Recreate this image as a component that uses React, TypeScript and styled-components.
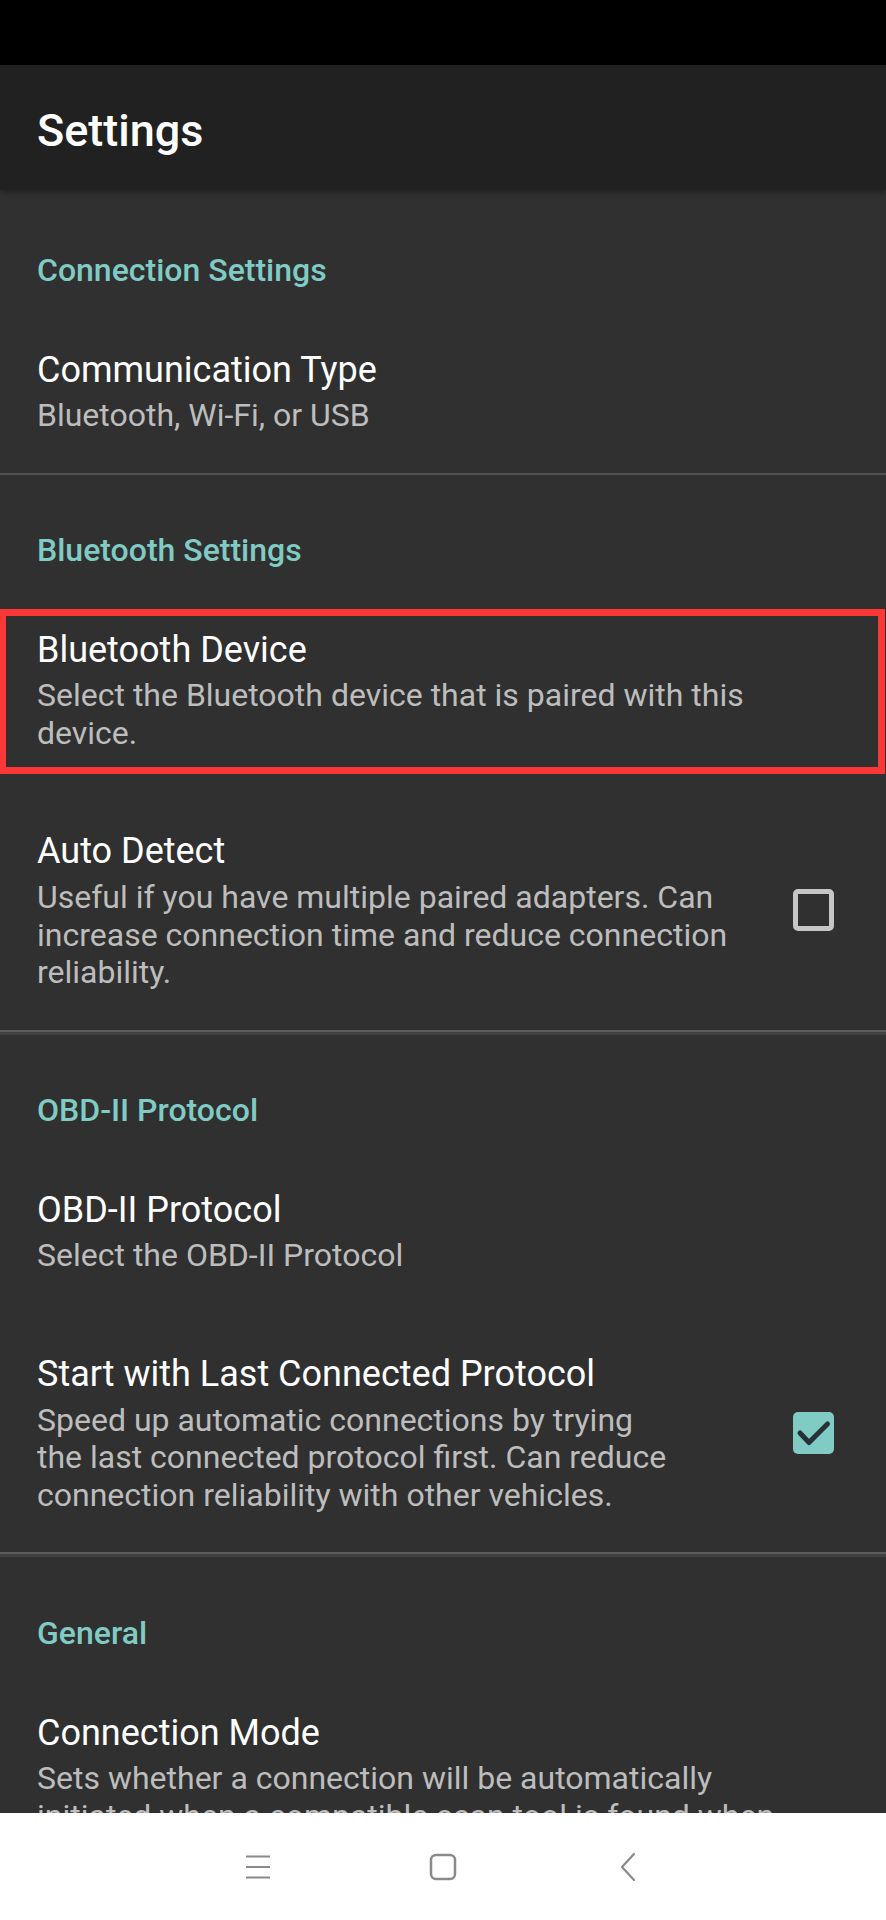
import React from "react";
import styled, {createGlobalStyle} from "styled-components";

const GlobalStyle = createGlobalStyle`
  html, body {
    margin: 0;
    padding: 0;
    background: #303030;
  }
  body {
    font-family: Roboto, "Noto Sans", "Liberation Sans", sans-serif;
    -webkit-font-smoothing: antialiased;
  }
  * {
    box-sizing: border-box;
  }
`;

const Screen = styled.div`
  width: 886px;
  height: 1920px;
  display: flex;
  flex-direction: column;
  overflow: hidden;
  background: #303030;
`;

const StatusBar = styled.div`
  height: 65px;
  flex-shrink: 0;
  background: #000;
`;

const AppBar = styled.header`
  position: relative;
  z-index: 1;
  height: 125px;
  flex-shrink: 0;
  padding: 40px 37px 0;
  background: #212121;
  box-shadow: 0 2px 6px rgba(0, 0, 0, 0.35);
`;

const AppTitle = styled.h1`
  margin: 0;
  font-size: 45px;
  line-height: 52px;
  font-weight: 500;
  color: #fff;
`;

const List = styled.main`
  flex: 1;
  min-height: 0;
  overflow: hidden;
`;

const Category = styled.div<{ $first?: boolean }>`
  padding: ${(p) => (p.$first ? "59.5px" : "55.2px")} 37px 19px;
  font-size: 32px;
  line-height: 40px;
  font-weight: 500;
  color: #80cbc4;
`;

const Item = styled.div`
  position: relative;
  display: flex;
  align-items: center;
  padding: 38px 52px 38px 37px;
`;

const ItemText = styled.div`
  flex: 1;
  min-width: 0;
`;

const ItemTitle = styled.div`
  font-size: 36px;
  line-height: 46px;
  color: #fff;
  white-space: nowrap;
`;

const ItemSummary = styled.div`
  margin-top: 4.5px;
  font-size: 32px;
  line-height: 37.6px;
  color: #bdbdbd;
  white-space: nowrap;
`;

const Highlight = styled.div`
  position: absolute;
  top: 20px;
  bottom: 16px;
  left: 0;
  right: 1px;
  border: 7px solid #fc3737;
  border-left-width: 6px;
  pointer-events: none;
`;

const Box = styled.div<{ $checked?: boolean }>`
  width: 41px;
  height: 42px;
  flex-shrink: 0;
  border-radius: 5px;
  border: ${(p) => (p.$checked ? "none" : "5px solid #c6c6c6")};
  background: ${(p) => (p.$checked ? "#80cbc4" : "transparent")};
  display: flex;
  align-items: center;
  justify-content: center;
`;

const Divider = styled.div<{ $heavy?: boolean }>`
  height: ${(p) => (p.$heavy ? "5px" : "2px")};
  background: ${(p) =>
    p.$heavy ? "linear-gradient(#5c5c5c 0 45%, #414141 45% 100%)" : "#505050"};
`;

const NavBar = styled.nav`
  height: 107px;
  flex-shrink: 0;
  background: #fff;
  display: flex;
  align-items: center;
  justify-content: center;
  gap: 145px;
`;

const NavButton = styled.div`
  width: 40px;
  height: 40px;
  display: flex;
  align-items: center;
  justify-content: center;
  color: #8a8a8a;
`;

type Pref = {
  title: string;
  lines?: string[];
  checkbox?: "on" | "off";
  highlight?: boolean;
};

function Checkbox({checked}: { checked: boolean }) {
  return (
    <Box $checked={checked}>
      {checked && (
        <svg width="41" height="42" viewBox="0 0 41 42">
          <path d="M7 21 L16 30.5 L34.5 12" fill="none" stroke="#263238" strokeWidth="5" strokeLinecap="round" strokeLinejoin="round" />
        </svg>
      )}
    </Box>
  );
}

function Preference({title, lines, checkbox, highlight}: Pref) {
  return (
    <Item>
      <ItemText>
        <ItemTitle>{title}</ItemTitle>
        {lines && (
          <ItemSummary>
            {lines.map((l, i) => (
              <React.Fragment key={i}>
                {i > 0 && <br />}
                {l}
              </React.Fragment>
            ))}
          </ItemSummary>
        )}
      </ItemText>
      {checkbox && <Checkbox checked={checkbox === "on"} />}
      {highlight && <Highlight />}
    </Item>
  );
}

function App() {
  return (
    <Screen>
      <GlobalStyle />
      <StatusBar />
      <AppBar>
        <AppTitle>Settings</AppTitle>
      </AppBar>
      <List>
        <Category $first>Connection Settings</Category>
        <Preference title="Communication Type" lines={["Bluetooth, Wi-Fi, or USB"]} />
        <Divider />

        <Category>Bluetooth Settings</Category>
        <Preference
          title="Bluetooth Device"
          lines={["Select the Bluetooth device that is paired with this", "device."]}
          highlight
        />
        <Preference
          title="Auto Detect"
          lines={[
            "Useful if you have multiple paired adapters. Can",
            "increase connection time and reduce connection",
            "reliability.",
          ]}
          checkbox="off"
        />
        <Divider $heavy />

        <Category>OBD-II Protocol</Category>
        <Preference title="OBD-II Protocol" lines={["Select the OBD-II Protocol"]} />
        <Preference
          title="Start with Last Connected Protocol"
          lines={[
            "Speed up automatic connections by trying",
            "the last connected protocol first. Can reduce",
            "connection reliability with other vehicles.",
          ]}
          checkbox="on"
        />
        <Divider $heavy />

        <Category>General</Category>
        <Preference
          title="Connection Mode"
          lines={[
            "Sets whether a connection will be automatically",
            "initiated when a compatible scan tool is found when",
            "the app is started.",
          ]}
        />
      </List>
      <NavBar>
        <NavButton>
          <svg width="26" height="26" viewBox="0 0 26 26">
            <path d="M1 2.5 H25 M1 13 H25 M1 23.5 H25" stroke="currentColor" strokeWidth="2" />
          </svg>
        </NavButton>
        <NavButton>
          <svg width="28" height="28" viewBox="0 0 28 28">
            <rect x="2" y="2" width="24" height="24" rx="5" fill="none" stroke="currentColor" strokeWidth="2.5" />
          </svg>
        </NavButton>
        <NavButton>
          <svg width="20" height="30" viewBox="0 0 20 30">
            <path d="M16 2 L4 15 L16 28" fill="none" stroke="currentColor" strokeWidth="2.2" strokeLinecap="round" strokeLinejoin="round" />
          </svg>
        </NavButton>
      </NavBar>
    </Screen>
  );
}

export default App;
